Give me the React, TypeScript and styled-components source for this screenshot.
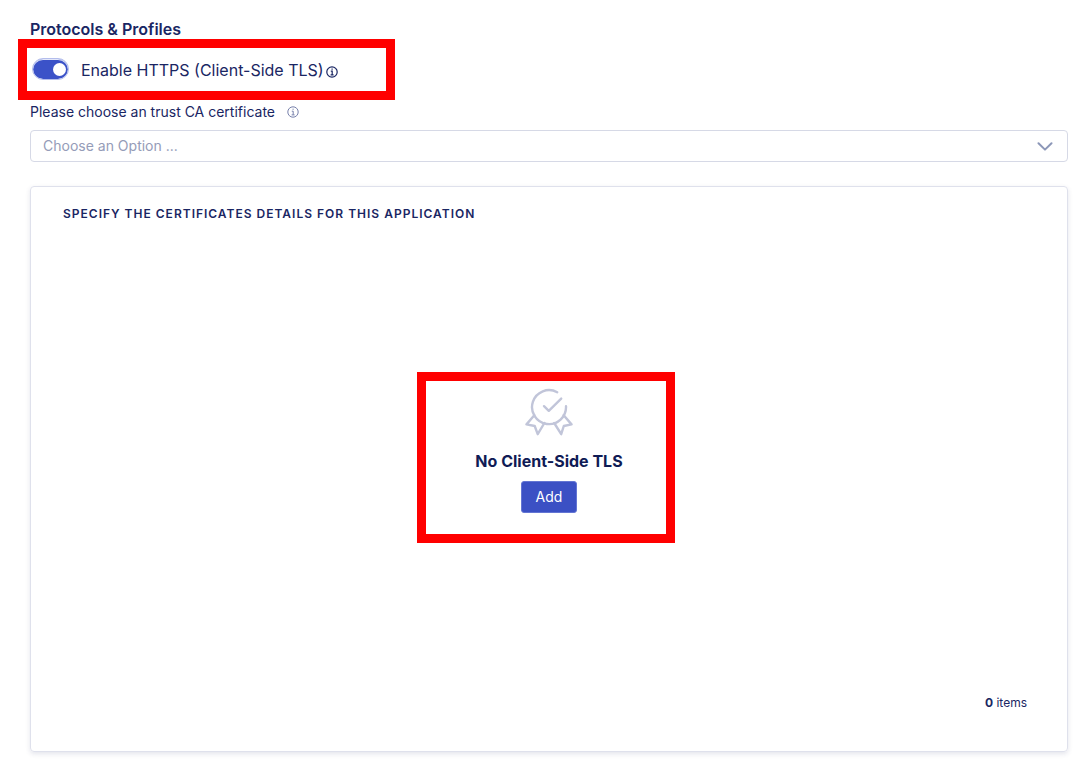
import React, { useState } from "react";
import styled, { createGlobalStyle } from "styled-components";

const GlobalStyle = createGlobalStyle`
  *, *::before, *::after { box-sizing: border-box; }
  body {
    margin: 0;
    background: #ffffff;
    color: #1b264f;
    font-family: Inter, "Liberation Sans", sans-serif;
    font-size: 14px;
    line-height: 20px;
  }
  button, input, select { font: inherit; }
`;

const navy = "#1a2663";

const Page = styled.main`
  display: flex;
  flex-direction: column;
  padding: 19px 7px 12px 30px;
`;

const SectionTitle = styled.h2`
  margin: 0;
  font-size: 16px;
  line-height: 20px;
  font-weight: 600;
  color: ${navy};
`;

const HighlightRow = styled.div`
  display: flex;
  align-items: center;
  align-self: flex-start;
  width: 377px;
  max-width: 100%;
  height: 61px;
  margin-left: -12px;
  padding: 0 5px;
  border: 9px solid #ff0000;
`;

const Toggle = styled.input`
  appearance: none;
  flex: none;
  display: flex;
  align-items: center;
  width: 37px;
  height: 22px;
  margin: 0 12px 1px 0;
  padding: 0 2px;
  border: 1px solid #b3bdec;
  border-radius: 11px;
  background: #a9b0c6;
  background-clip: padding-box;
  box-shadow: inset 0 1px 0 0 #e3e7fa;
  cursor: pointer;

  &::before {
    content: "";
    width: 13px;
    height: 13px;
    border-radius: 50%;
    background: #ffffff;
  }

  &:checked {
    justify-content: flex-end;
    background-color: #3b52c8;
  }
`;

const ToggleLabel = styled.label`
  font-size: 16px;
  line-height: 20px;
  color: ${navy};
`;

const FieldHeader = styled.div`
  display: flex;
  align-items: center;
  gap: 12px;
  padding: 2px 0 8px;
`;

const FieldLabel = styled.label`
  font-size: 14px;
  line-height: 20px;
  color: ${navy};
`;

const Info = styled.svg<{ $soft?: boolean }>`
  flex: none;
  width: 12px;
  height: 12px;
  fill: none;
  stroke: ${(p) => (p.$soft ? "#7780ab" : navy)};
  stroke-width: ${(p) => (p.$soft ? 1 : 1.2)};
`;

const InfoSlot = styled.span`
  display: flex;
  padding: 4px 0 0 2px;
`;

const SelectBox = styled.div`
  position: relative;
  display: flex;
`;

const Select = styled.select`
  appearance: none;
  width: 100%;
  height: 32px;
  padding: 0 40px 0 12px;
  border: 1px solid #d6d9e6;
  border-radius: 4px;
  background: #ffffff;
  color: #959cb8;
  font-size: 14px;
`;

const Chevron = styled.svg`
  position: absolute;
  top: 12px;
  right: 15px;
  width: 16px;
  height: 9px;
  fill: none;
  stroke: #8c97b8;
  stroke-width: 2;
  stroke-linecap: round;
  stroke-linejoin: round;
  pointer-events: none;
`;

const Card = styled.section`
  display: flex;
  flex-direction: column;
  min-height: 566px;
  margin-top: 24px;
  padding: 17px 40px 38px 32px;
  border: 1px solid #dfe1ec;
  border-radius: 4px;
  box-shadow: 0 2px 5px rgba(31, 43, 102, 0.12);
`;

const CardTitle = styled.h3`
  margin: 0;
  font-size: 12px;
  line-height: 20px;
  font-weight: 600;
  letter-spacing: 1px;
  text-transform: uppercase;
  color: ${navy};
`;

const EmptyArea = styled.div`
  display: flex;
  flex: 1;
  justify-content: center;
  align-items: flex-start;
  padding: 148px 0 0 8px;
`;

const EmptyState = styled.div`
  position: relative;
  display: flex;
  flex-direction: column;
  align-items: center;
  width: 258px;
  height: 171px;
  padding-top: 16px;

  &::after {
    content: "";
    position: absolute;
    inset: 0 3px 0 -3px;
    border: 9px solid #ff0000;
    pointer-events: none;
  }
`;

const Badge = styled.svg`
  width: 48px;
  height: 48px;
  fill: none;
  stroke: #c1c5d9;
  stroke-width: 2.4;
  stroke-linecap: round;
  stroke-linejoin: round;
`;

const EmptyTitle = styled.p`
  margin: 15px 0 10px;
  font-size: 16px;
  line-height: 20px;
  font-weight: 700;
  color: #0f1b55;
`;

const AddButton = styled.button`
  width: 56px;
  height: 32px;
  padding: 0;
  border: 1px solid #6375d3;
  border-radius: 3px;
  background: #3b50c4;
  color: #ffffff;
  font-size: 14px;
  line-height: 20px;
  cursor: pointer;
`;

const ItemCount = styled.p`
  margin: 0;
  text-align: right;
  font-size: 12px;
  line-height: 20px;
  color: ${navy};

  strong { font-weight: 700; }
`;

function InfoIcon({ soft }: { soft?: boolean }) {
  return (
    <Info $soft={soft} viewBox="0 0 12 12" aria-hidden="true">
      <circle cx="6" cy="6" r="5.2" />
      <path d="M4.8 5.2H6.2V8.8M4.6 8.9H7.6M5.5 3.2H6.7" />
    </Info>
  );
}

export default function App() {
  const [enabled, setEnabled] = useState(true);

  return (
    <>
      <GlobalStyle />
      <Page>
        <SectionTitle>Protocols &amp; Profiles</SectionTitle>
        <HighlightRow>
          <Toggle
            id="https"
            type="checkbox"
            role="switch"
            checked={enabled}
            onChange={(e) => setEnabled(e.target.checked)}
          />
          <ToggleLabel htmlFor="https">Enable HTTPS (Client-Side TLS)</ToggleLabel>
          <InfoSlot>
            <InfoIcon />
          </InfoSlot>
        </HighlightRow>
        <FieldHeader>
          <FieldLabel htmlFor="trust-ca">Please choose an trust CA certificate</FieldLabel>
          <InfoIcon soft />
        </FieldHeader>
        <SelectBox>
          <Select id="trust-ca" defaultValue="">
            <option value="">Choose an Option ...</option>
          </Select>
          <Chevron viewBox="0 0 16 9" aria-hidden="true">
            <path d="M1.5 1.2L8 7.6L14.5 1.2" />
          </Chevron>
        </SelectBox>
        <Card>
          <CardTitle>Specify the certificates details for this application</CardTitle>
          <EmptyArea>
            <EmptyState>
              <Badge viewBox="0 0 48 48" aria-hidden="true">
                <path d="M32.2 4.2A17 17 0 1 0 41 18.2" />
                <path d="M19 18.2L23.8 22.8L36.2 10.6" />
                <path d="M9.3 27.2L1.5 36.4L9.7 38L12.7 46.2L19.4 35" />
                <path d="M38.7 27.2L46.5 36.4L38.8 38L36.2 46.2L29.2 35" />
              </Badge>
              <EmptyTitle>No Client-Side TLS</EmptyTitle>
              <AddButton type="button">Add</AddButton>
            </EmptyState>
          </EmptyArea>
          <ItemCount>
            <strong>0</strong> items
          </ItemCount>
        </Card>
      </Page>
    </>
  );
}
